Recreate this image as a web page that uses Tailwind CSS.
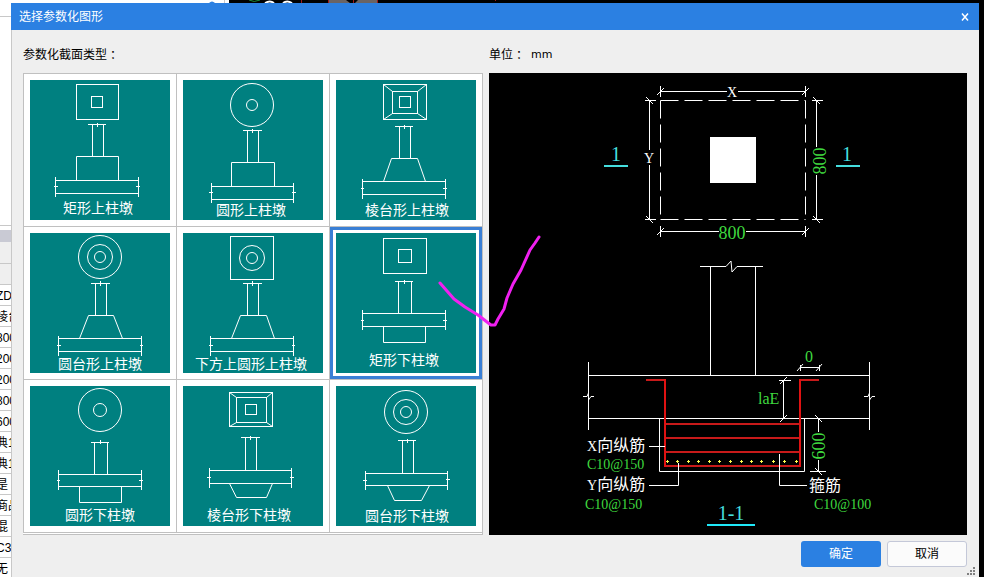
<!DOCTYPE html>
<html lang="zh-CN">
<head>
    <meta charset="UTF-8"/>
    <meta name="viewport" content="width=device-width, initial-scale=1"/>
    <title>选择参数化图形</title>
    <script src="https://cdn.jsdelivr.net/npm/@tailwindcss/browser@4"></script>
</head>
<body class="flex min-h-screen overflow-x-hidden bg-black font-['Liberation_Sans','Noto_Sans_CJK_SC',sans-serif] text-xs text-black">
    <!-- strip of the property list behind the dialog -->
    <aside class="flex w-[11px] shrink-0 flex-col overflow-hidden whitespace-nowrap bg-white">
        <div class="h-[17px] shrink-0 border-b border-[#c8c8c8]"></div>
        <div class="h-[209px] shrink-0 border-b border-[#c8c8c8]"></div>
        <div class="h-1 shrink-0"></div>
        <div class="h-3 shrink-0 bg-[#c9cad4]"></div>
        <div class="h-[22px] shrink-0 border-b border-[#c8c8c8] bg-[#efefef]"></div>
        <div class="h-[21px] shrink-0 border-b border-[#c8c8c8] bg-[#efefef]"></div>
        <ul class="h-0 grow -ml-1 leading-[22px]">
            <li class="h-[21px] border-b border-[#c8c8c8]">ZD</li>
            <li class="h-[21px] border-b border-[#c8c8c8]">棱台</li>
            <li class="h-[21px] border-b border-[#c8c8c8]">800mm</li>
            <li class="h-[21px] border-b border-[#c8c8c8]">200mm</li>
            <li class="h-[21px] border-b border-[#c8c8c8]">200mm</li>
            <li class="h-[21px] border-b border-[#c8c8c8]">800mm</li>
            <li class="h-[21px] border-b border-[#c8c8c8]">600mm</li>
            <li class="h-[21px] border-b border-[#c8c8c8]">典1</li>
            <li class="h-[21px] border-b border-[#c8c8c8]">典1</li>
            <li class="h-[21px] border-b border-[#c8c8c8]">是</li>
            <li class="h-[21px] border-b border-[#c8c8c8]">商品</li>
            <li class="h-[21px] border-b border-[#c8c8c8]">混</li>
            <li class="h-[21px] border-b border-[#c8c8c8]">C3</li>
            <li class="h-[21px]">无</li>
        </ul>
    </aside>

    <div class="flex grow flex-col pr-[5px]">
        <svg class="h-[3px] w-[968px] shrink-0" viewBox="0 0 968 3" fill="none" aria-hidden="true">
            <path d="M0 0H218V3H0z" fill="#fff"/>
            <path d="M213.500 0V3" stroke="#c8c8c8"/>
            <path d="M198 3Q201 0 204 3z" fill="#2b80e2"/>
            <path d="M238 0Q243 3 249 0" stroke="#1c8a34"/>
            <path d="M254 3Q259 0 263 3M272 3Q276 0 281 3" stroke="#fff" stroke-width="2"/>
            <path d="M317 0H366V3H317z" fill="#6a6464"/>
            <path d="M335 0H347L344 3H339z" fill="#000"/>
            <path d="M290.500 0V3M317.500 0V3M342.500 0V3M366.500 0V3M484.500 0V1" stroke="#a01818"/>
        </svg>

        <main role="dialog" aria-labelledby="title" class="flex grow flex-col bg-[#efefef]">
            <header class="flex h-[27px] shrink-0 items-center justify-between bg-[#2b80e2] pl-2 pr-2 text-white">
                <h1 id="title" class="leading-4">选择参数化图形</h1>
                <button type="button" aria-label="关闭" class="flex size-3 items-center justify-center">
                    <svg class="size-2" viewBox="0 0 8 8" fill="none" stroke="#fff" stroke-width="1.500"><path d="M1 .5L7 7.500M7 .5L1 7.500"/></svg>
                </button>
            </header>

            <div class="relative flex grow gap-1.5 border-l border-[#c8c8c8] pl-[11px] pr-3">
                <section class="flex w-[460px] shrink-0 flex-col">
                    <h2 class="flex h-[43px] shrink-0 items-center pt-[7px] leading-4">参数化截面类型<span lang="zh-TW" class="font-['Noto_Sans_CJK_TC',sans-serif]">：</span></h2>
                    <div class="grow border-b border-r border-[#c0c0c0] bg-white">
                    <div class="-mr-px grid grid-cols-3 border-l border-t border-[#c0c0c0]">
                        <button type="button" aria-pressed="false" class="border-b border-r border-[#c0c0c0] p-1.5">
                            <svg class="block w-full bg-[#008080]" viewBox="0 0 140 140" fill="none" stroke="#fff">
                                <rect x="46.500" y="4.500" width="42" height="35"/>
                                <rect x="61.500" y="16.500" width="11" height="11"/>
                                <path d="M58 44.500H76M67.500 43V47M62.500 44.500V76.500M73.500 44.500V76.500M46.500 100.500V76.500H88.500V100.500"/>
                                <path d="M25.500 97V117M108.500 97V117M25.500 100.500H108.500M25.500 113.500H108.500M24 106.500H28M106 106.500H110"/>
                                <text x="33" y="133" font-size="14" fill="#fff" stroke="none">矩形上柱墩</text>
                            </svg>
                        </button>
                        <button type="button" aria-pressed="false" class="border-b border-r border-[#c0c0c0] p-1.5">
                            <svg class="block w-full bg-[#008080]" viewBox="0 0 140 140" fill="none" stroke="#fff">
                                <circle cx="69" cy="25" r="21.500"/>
                                <circle cx="69" cy="25" r="5.500"/>
                                <path d="M60 50.500H79M69.500 49V53M64.500 50.500V82.500M75.500 50.500V82.500M48.500 106.500V82.500H91.500V106.500"/>
                                <path d="M28.500 103V123M110.500 103V123M28.500 106.500H110.500M28.500 119.500H110.500M26 112.500H30M109 112.500H113"/>
                                <text x="33" y="135" font-size="14" fill="#fff" stroke="none">圆形上柱墩</text>
                            </svg>
                        </button>
                        <button type="button" aria-pressed="false" class="border-b border-r border-[#c0c0c0] p-1.5">
                            <svg class="block w-full bg-[#008080]" viewBox="0 0 140 140" fill="none" stroke="#fff">
                                <rect x="47.500" y="4.500" width="43" height="35"/>
                                <rect x="56.500" y="11.500" width="25" height="22"/>
                                <rect x="63.500" y="16.500" width="11" height="11"/>
                                <path d="M47.500 4.500L56.500 11.500M90.500 4.500L81.500 11.500M47.500 39.500L56.500 33.500M90.500 39.500L81.500 33.500"/>
                                <path d="M59 46.500H77M68.500 45V49M63.500 46.500V78.500M74.500 46.500V78.500M47.500 101.500L55.500 78.500H81.500L89.500 101.500"/>
                                <path d="M26.500 99V119M109.500 99V119M26.500 101.500H109.500M26.500 114.500H109.500M25 108.500H28M107 108.500H111"/>
                                <text x="29" y="135" font-size="14" fill="#fff" stroke="none">棱台形上柱墩</text>
                            </svg>
                        </button>
                        <button type="button" aria-pressed="false" class="border-b border-r border-[#c0c0c0] p-1.5">
                            <svg class="block w-full bg-[#008080]" viewBox="0 0 140 140" fill="none" stroke="#fff">
                                <circle cx="70" cy="24" r="21.500"/>
                                <circle cx="70" cy="24" r="12.500"/>
                                <circle cx="70" cy="24" r="5.500"/>
                                <path d="M61 50.500H80M70.500 48V53M65.500 50.500V82.500M76.500 50.500V82.500M49.500 105.500L58.500 82.500H83.500L92.500 105.500"/>
                                <path d="M28.500 103V123M111.500 103V123M28.500 105.500H111.500M28.500 118.500H111.500M27 112.500H31M110 112.500H113"/>
                                <text x="28" y="136" font-size="14" fill="#fff" stroke="none">圆台形上柱墩</text>
                            </svg>
                        </button>
                        <button type="button" aria-pressed="false" class="border-b border-r border-[#c0c0c0] p-1.5">
                            <svg class="block w-full bg-[#008080]" viewBox="0 0 140 140" fill="none" stroke="#fff">
                                <rect x="47.500" y="3.500" width="43" height="43"/>
                                <circle cx="69" cy="25" r="12.500"/>
                                <circle cx="69" cy="25" r="5.500"/>
                                <path d="M60 50.500H79M69.500 48V53M64.500 50.500V82.500M75.500 50.500V82.500M48.500 105.500L57.500 82.500H83.500L91.500 105.500"/>
                                <path d="M27.500 103V123M110.500 103V123M27.500 105.500H110.500M27.500 118.500H110.500M26 112.500H30M109 112.500H112"/>
                                <text x="12" y="136" font-size="14" fill="#fff" stroke="none">下方上圆形上柱墩</text>
                            </svg>
                        </button>
                        <button type="button" aria-pressed="true" class="border-b border-r border-[#c0c0c0] p-1.5 ring-3 ring-inset ring-[#3a7fd5]">
                            <svg class="block w-full bg-[#008080]" viewBox="0 0 140 140" fill="none" stroke="#fff">
                                <rect x="47.500" y="5.500" width="43" height="35"/>
                                <rect x="62.500" y="16.500" width="13" height="13"/>
                                <path d="M59 48.500H77M68.500 47V51M62.500 48.500V80.500M75.500 48.500V80.500M47.500 93.500V109.500H89.500V93.500"/>
                                <path d="M26.500 77V97M109.500 77V97M26.500 80.500H109.500M26.500 93.500H109.500M25 87.500H28M107 87.500H111"/>
                                <text x="33" y="132" font-size="14" fill="#fff" stroke="none">矩形下柱墩</text>
                            </svg>
                        </button>
                        <button type="button" aria-pressed="false" class="border-b border-r border-[#c0c0c0] p-1.5">
                            <svg class="block w-full bg-[#008080]" viewBox="0 0 140 140" fill="none" stroke="#fff">
                                <circle cx="70" cy="24" r="21.500"/>
                                <circle cx="70" cy="24" r="6.500"/>
                                <path d="M61 56.500H79M70.500 54V58M64.500 56.500V88.500M77.500 56.500V88.500M49.500 100.500V116.500H91.500V100.500"/>
                                <path d="M28.500 84V104M111.500 84V104M28.500 88.500H111.500M28.500 100.500H111.500M27 94.500H30M109 94.500H113"/>
                                <text x="35" y="134" font-size="14" fill="#fff" stroke="none">圆形下柱墩</text>
                            </svg>
                        </button>
                        <button type="button" aria-pressed="false" class="border-b border-r border-[#c0c0c0] p-1.5">
                            <svg class="block w-full bg-[#008080]" viewBox="0 0 140 140" fill="none" stroke="#fff">
                                <rect x="46.500" y="6.500" width="43" height="34"/>
                                <rect x="53.500" y="11.500" width="30" height="25"/>
                                <rect x="62.500" y="18.500" width="11" height="10"/>
                                <path d="M46.500 6.500L53.500 11.500M89.500 6.500L83.500 11.500M46.500 40.500L53.500 36.500M89.500 40.500L83.500 36.500"/>
                                <path d="M58 51.500H77M67.500 50V54M62.500 51.500V84.500M73.500 51.500V84.500M46.500 97.500L53.500 111.500H83.500L89.500 97.500"/>
                                <path d="M26.500 82V102M108.500 82V102M26.500 84.500H108.500M26.500 97.500H108.500M24 91.500H28M107 91.500H111"/>
                                <text x="24" y="134" font-size="14" fill="#fff" stroke="none">棱台形下柱墩</text>
                            </svg>
                        </button>
                        <button type="button" aria-pressed="false" class="border-b border-r border-[#c0c0c0] p-1.5">
                            <svg class="block w-full bg-[#008080]" viewBox="0 0 140 140" fill="none" stroke="#fff">
                                <circle cx="70" cy="26" r="21.500"/>
                                <circle cx="70" cy="26" r="12.500"/>
                                <circle cx="70" cy="26" r="5.500"/>
                                <path d="M62 54.500H80M71.500 53V57M66.500 54.500V87.500M77.500 54.500V87.500M51.500 99.500L58.500 114.500H85.500L93.500 99.500"/>
                                <path d="M29.500 85V104M111.500 85V104M29.500 87.500H111.500M29.500 99.500H111.500M27 94.500H31M110 93.500H114"/>
                                <text x="29" y="135" font-size="14" fill="#fff" stroke="none">圆台形下柱墩</text>
                            </svg>
                        </button>
                    </div>
                    </div>
                </section>

                <section class="flex min-w-0 grow flex-col">
                    <h2 class="flex h-[43px] shrink-0 items-center pt-[7px] leading-4">单位<span lang="zh-TW" class="font-['Noto_Sans_CJK_TC',sans-serif]">：</span><span class="ml-1.5 font-['DejaVu_Sans',sans-serif] text-[11px]">mm</span></h2>
                    <div class="grow bg-black">
                        <svg class="block w-full font-['Liberation_Serif','Noto_Sans_CJK_SC',serif]" viewBox="0 0 478 462" fill="none" stroke="#fff">
                            <!-- plan -->
                            <path d="M171.500 27.500H316.500M171.500 146.500H316.500M171.500 27.500V146.500M316.500 27.500V146.500" stroke-dasharray="18 6"/>
                            <rect x="221" y="64" width="46" height="46" fill="#fff" stroke="none"/>
                            <path d="M171.500 18.500H238M249 18.500H316.500M171.500 13V24M316.500 13V24M168 22L175 15M313 22L320 15"/>
                            <path d="M171.500 158.500H230M257 158.500H316.500M171.500 153V164M316.500 153V164M168 162L175 155M313 162L320 155"/>
                            <path d="M160.500 27.500V77M160.500 92V146.500M156 27.500H167M156 146.500H167M157 24L164 31M157 143L164 150"/>
                            <path d="M327.500 27.500V74M327.500 102V146.500M323 27.500H334M323 146.500H334M324 24L331 31M324 143L331 150"/>
                            <path d="M115 93H139M347 93H371" stroke="#45dede" stroke-width="2"/>
                            <!-- section -->
                            <path d="M211 193.500H237L242 188L243 199L248 193.500H274M221.500 193.500V302.500M266.500 193.500V302.500"/>
                            <path d="M99.500 302.500H380.500M99.500 345.500H380.500"/>
                            <path d="M99.500 289V320M99.500 327V357M94 323.500H98L99.500 320V327L102 323.500H105M380.500 289V320M380.500 327V357M375 323.500H379L380.500 320V327L383 323.500H386"/>
                            <path d="M170.500 345.500V398.500H315.500V345.500"/>
                            <path d="M157 307H176M311 307H330M176 351H311M176 365H311M176 379H311M176 393H311" stroke="#c81a1a" stroke-width="2"/>
                            <path d="M176 306V394M311 306V394" stroke="#e01212" stroke-width="2"/>
                            <path d="M177 388.500H180M187 388.500H190M198 388.500H201M208 388.500H211M219 388.500H222M229 388.500H232M240 388.500H243M251 388.500H254M261 388.500H264M271 388.500H274M283 388.500H286M294 388.500H297M306 388.500H309" stroke="#ffff50"/>
                            <path d="M178.500 387V390M188.500 387V390M199.500 387V390M209.500 387V390M220.500 387V390M230.500 387V390M241.500 387V390M252.500 387V390M262.500 387V390M272.500 387V390M284.500 387V390M295.500 387V390M307.500 387V390" stroke="#ffff50"/>
                            <path d="M160 373.500H176M160 412.500H189.500V390M290.500 381V412.500H318"/>
                            <path d="M311 294.500H330M311.500 292V298M330.500 292V298M308 298L314 291M327 298L333 291"/>
                            <path d="M294.500 307.500V345.500M290 307.500H302M291 311L298 304M291 349L298 342"/>
                            <path d="M329.500 345.500V359M329.500 387V398.500M321 398.500H337M326 342L333 349M326 395L333 402"/>
                            <path d="M218 452H266" stroke="#20e8f8" stroke-width="2"/>
                            <g fill="#fff" stroke="none" font-size="16">
                                <text x="243" y="24" text-anchor="middle" font-size="14">X</text>
                                <text x="160" y="90" text-anchor="middle" font-size="14">Y</text>
                                <text x="98" y="378"><tspan font-size="14">X</tspan>向纵筋</text>
                                <text x="98" y="417"><tspan font-size="14">Y</tspan>向纵筋</text>
                                <text x="320" y="418">箍筋</text>
                            </g>
                            <g fill="#3fd83f" stroke="none" font-size="18">
                                <text x="243" y="166" text-anchor="middle">800</text>
                                <text transform="translate(337 88) rotate(-90)" text-anchor="middle">800</text>
                                <text transform="translate(336 373) rotate(-90)" text-anchor="middle">600</text>
                            </g>
                            <g fill="#3fd83f" stroke="none" font-size="16">
                                <text x="320" y="289" text-anchor="middle">0</text>
                                <text x="269" y="331">laE</text>
                            </g>
                            <g fill="#3fd83f" stroke="none" font-size="14">
                                <text x="98" y="396">C10@150</text>
                                <text x="96" y="436">C10@150</text>
                                <text x="325" y="436">C10@100</text>
                            </g>
                            <g fill="#45dede" stroke="none" font-size="20">
                                <text x="127" y="88" text-anchor="middle">1</text>
                                <text x="358" y="88" text-anchor="middle">1</text>
                                <text x="242" y="447" text-anchor="middle">1-1</text>
                            </g>
                        </svg>
                    </div>
                </section>

                <!-- pen mark over the chosen shape -->
                <svg class="pointer-events-none absolute left-[423px] top-[200px] h-[104px] w-[112px]" viewBox="435 230 112 104" fill="none" stroke="#f020f0" stroke-width="3" stroke-linecap="round" stroke-linejoin="round" aria-hidden="true">
                    <path d="M440 283L447 291L454 299L465 307L478 315L487 322L491 325L495 325L498 319L504 309L507 298L513 284L521 270L530 250L535 243L539 237"/>
                </svg>
            </div>

            <footer class="relative flex shrink-0 justify-end gap-1.5 border-l border-[#c8c8c8] pb-2.5 pr-3 pt-1.5">
                <button type="button" class="h-[26px] w-20 rounded-[3px] bg-[#2b80e2] text-white">确定</button>
                <button type="button" class="h-[26px] w-20 rounded-[3px] border border-[#c4c8d8] bg-[#fbfbfb]">取消</button>
                <svg class="absolute bottom-0.5 right-1 size-2" viewBox="0 0 8 8" fill="#808080" aria-hidden="true">
                    <path d="M6 0h2v2H6zM3 3h2v2H3zM6 3h2v2H6zM0 6h2v2H0zM3 6h2v2H3zM6 6h2v2H6z"/>
                </svg>
            </footer>
        </main>
    </div>
</body>
</html>
